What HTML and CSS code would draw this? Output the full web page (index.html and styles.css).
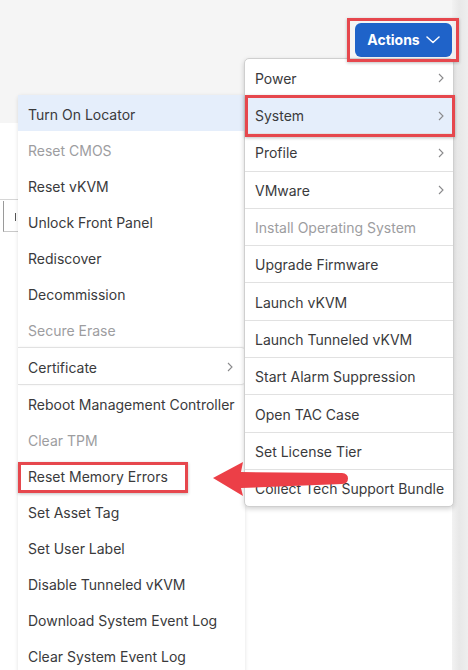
FILE: index.html
```html
<!DOCTYPE html>
<html>
<head>
<meta charset="utf-8">
<link rel="stylesheet" href="styles.css">
</head>
<body>
<div class="page">
  <div class="main">
    <div class="header">
      <button class="actions">Actions
        <svg class="caret" width="14" height="8" viewBox="0 0 14 8"><polyline points="1,1 7,6.5 13,1" fill="none" stroke="#fff" stroke-width="1.5" stroke-linecap="round" stroke-linejoin="round"/></svg>
      </button>
    </div>
    <div class="content">
      <div class="filterbar"><div class="filterbox"><span class="tick"></span></div></div>
    </div>
  </div>
  <div class="strip"></div>

  <ul class="menu menu-left">
    <li class="item active">Turn On Locator</li>
    <li class="item disabled">Reset CMOS</li>
    <li class="item">Reset vKVM</li>
    <li class="item">Unlock Front Panel</li>
    <li class="item">Rediscover</li>
    <li class="item">Decommission</li>
    <li class="item disabled">Secure Erase</li>
    <li class="item sub">Certificate<svg class="chev" width="6" height="10" viewBox="0 0 6 10"><polyline points="1,1 5,5 1,9" fill="none" stroke="#8a8a8c" stroke-width="1.1"/></svg></li>
    <li class="item">Reboot Management Controller</li>
    <li class="item disabled">Clear TPM</li>
    <li class="item">Reset Memory Errors</li>
    <li class="item">Set Asset Tag</li>
    <li class="item">Set User Label</li>
    <li class="item">Disable Tunneled vKVM</li>
    <li class="item">Download System Event Log</li>
    <li class="item">Clear System Event Log</li>
  </ul>

  <ul class="menu menu-right">
    <li class="ritem first">Power<svg class="chev" width="6" height="10" viewBox="0 0 6 10"><polyline points="1,1 5,5 1,9" fill="none" stroke="#8a8a8c" stroke-width="1.1"/></svg></li>
    <li class="ritem active">System<svg class="chev" width="6" height="10" viewBox="0 0 6 10"><polyline points="1,1 5,5 1,9" fill="none" stroke="#8a8a8c" stroke-width="1.1"/></svg></li>
    <li class="ritem">Profile<svg class="chev" width="6" height="10" viewBox="0 0 6 10"><polyline points="1,1 5,5 1,9" fill="none" stroke="#8a8a8c" stroke-width="1.1"/></svg></li>
    <li class="ritem">VMware<svg class="chev" width="6" height="10" viewBox="0 0 6 10"><polyline points="1,1 5,5 1,9" fill="none" stroke="#8a8a8c" stroke-width="1.1"/></svg></li>
    <li class="ritem disabled">Install Operating System</li>
    <li class="ritem">Upgrade Firmware</li>
    <li class="ritem">Launch vKVM</li>
    <li class="ritem">Launch Tunneled vKVM</li>
    <li class="ritem">Start Alarm Suppression</li>
    <li class="ritem">Open TAC Case</li>
    <li class="ritem">Set License Tier</li>
    <li class="ritem last">Collect Tech Support Bundle</li>
  </ul>

  <div class="hl hl-actions"></div>
  <div class="hl hl-system"></div>
  <div class="hl hl-memory"></div>

  <svg class="arrow" width="150" height="40" viewBox="0 0 150 40">
    <path d="M3,18 L33,2 L31,12 L132,13 Q138,13.5 138,18.5 Q138,23.5 132,24 L31,28 L33,36 Z" fill="#ec3f47"/>
  </svg>
</div>
</body>
</html>
```

FILE: styles.css
```css
* { box-sizing: border-box; }
html, body { margin: 0; padding: 0; }
body {
  width: 468px;
  height: 670px;
  overflow: hidden;
  background: #ffffff;
  font-family: Inter, "Noto Sans", "Liberation Sans", sans-serif;
}
.page {
  position: relative;
  display: flex;
  width: 468px;
  height: 670px;
}
.main {
  width: 452px;
  display: flex;
  flex-direction: column;
}
.header {
  height: 123px;
  background: #f5f5f5;
  display: flex;
  justify-content: flex-end;
  align-items: flex-start;
  padding-top: 23px;
}
.actions {
  width: 97px;
  height: 34px;
  border: none;
  border-radius: 6px;
  background: #1f63c9;
  color: #ffffff;
  font-family: Inter, "Noto Sans", "Liberation Sans", sans-serif;
  font-weight: 700;
  font-size: 14px;
  display: flex;
  align-items: center;
  justify-content: center;
  gap: 6px;
  padding: 0 0 2px 0;
}
.caret { margin-top: 1px; }
.content {
  flex: 1;
  background: #ffffff;
}
.filterbar {
  margin-top: 76px;
  border-top: 1px solid #d6d6d6;
  height: 34px;
  padding-left: 3px;
  padding-top: 1px;
}
.filterbox {
  width: 20px;
  height: 31px;
  border-left: 1px solid #9a9a9a;
  border-bottom: 1px solid #c9c9c9;
  position: relative;
}
.tick {
  position: absolute;
  left: 11px;
  top: 12px;
  width: 1px;
  height: 8px;
  background: #555;
}
.strip {
  width: 16px;
  background: linear-gradient(to right, #f2f2f2 0%, #e8e8e8 45%, #eeeeee 100%);
}
.menu {
  list-style: none;
  margin: 0;
  padding: 0;
  position: absolute;
  background: #ffffff;
  color: #3a3a3c;
  font-size: 14px;
}
.menu-left {
  left: 18px;
  top: 95px;
  width: 227px;
  height: 600px;
  border-radius: 4px 0 0 0;
  box-shadow: 0 1px 4px rgba(0,0,0,0.12);
}
.item {
  height: 36px;
  display: flex;
  align-items: center;
  padding-left: 10px;
  padding-right: 12px;
  padding-top: 2px;
  white-space: nowrap;
}
.item.sub {
  height: 38px;
  border-top: 1px solid #e1e1e1;
  border-bottom: 1px solid #e1e1e1;
  justify-content: space-between;
  box-shadow: 1px 0 2px rgba(0,0,0,0.08);
  border-radius: 0 4px 4px 0;
}
.menu-right {
  left: 244px;
  top: 58px;
  width: 210px;
  border: 1px solid #cfcfcf;
  border-radius: 5px;
  box-shadow: 0 2px 5px rgba(0,0,0,0.18);
  z-index: 2;
}
.ritem {
  height: 37.3px;
  display: flex;
  align-items: center;
  justify-content: space-between;
  padding-left: 10px;
  padding-right: 9px;
  padding-top: 1px;
  border-bottom: 1px solid #e1e1e1;
  white-space: nowrap;
}
.ritem.first { height: 38px; }
.ritem.last { border-bottom: none; height: 36px; }
.active { background: #e5eefb; }
.disabled { color: #9d9d9f; }
.chev { flex: none; }
.hl {
  position: absolute;
  border: 3px solid #e6474d;
  box-shadow: 0 1px 3px rgba(0,0,0,0.25);
  z-index: 3;
}
.hl-actions { left: 347px; top: 18px; width: 112px; height: 44px; }
.hl-system { left: 245px; top: 95px; width: 210px; height: 42px; }
.hl-memory { left: 18px; top: 462px; width: 170px; height: 31px; }
.arrow {
  position: absolute;
  left: 210px;
  top: 460px;
  z-index: 4;
}
```
